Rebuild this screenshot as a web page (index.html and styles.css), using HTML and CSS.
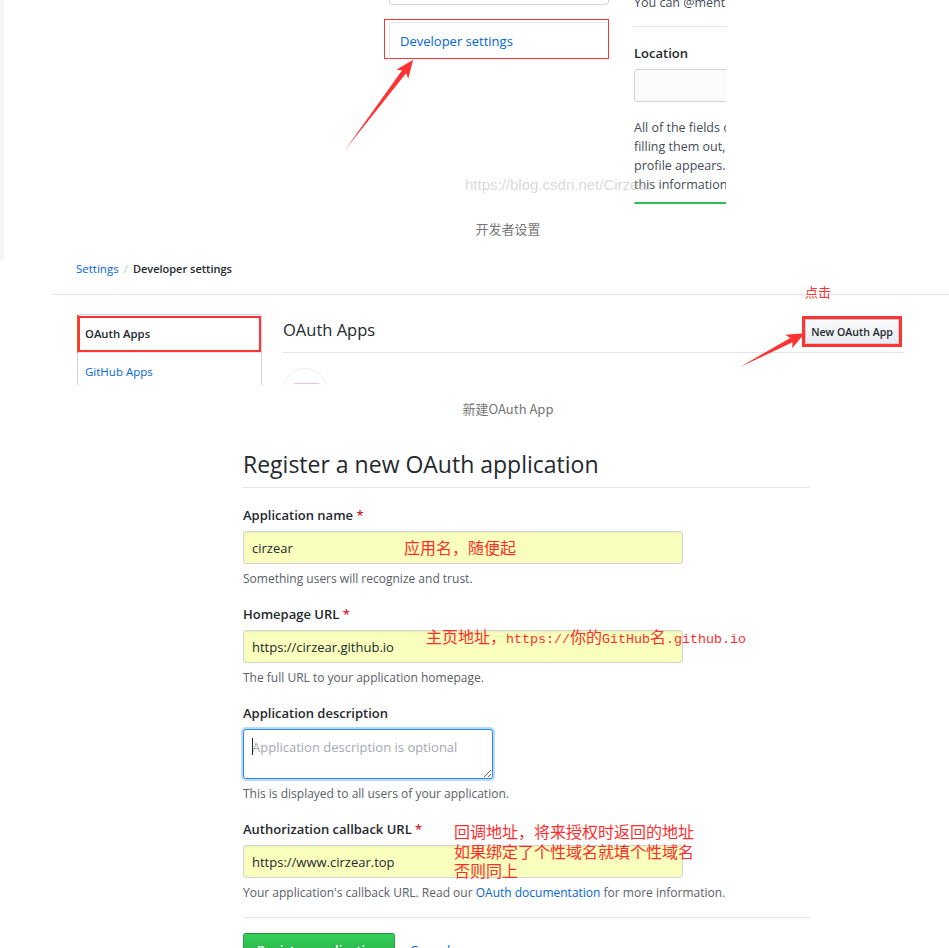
FILE: index.html
```html
<!DOCTYPE html>
<html lang="zh-CN">
<head>
<meta charset="utf-8">
<title>GitHub OAuth App 注册步骤</title>
<link rel="stylesheet" href="styles.css">
</head>
<body>
<div class="page">
  <section class="shot shot-profile">
    <div class="profile-left">
      <div class="clip-input"></div>
      <div class="mark-box">
        <a class="dev-link">Developer settings</a>
      </div>
    </div>
    <div class="profile-right">
      <p class="clip-line">You can @mention other users and organizations</p>
      <hr class="rule">
      <div class="lbl">Location</div>
      <div class="loc-input"></div>
      <p class="note-lines">All of the fields on this page are optional<br>filling them out, you're giving us consent<br>profile appears. Please see our privacy<br>this information.</p>
      <div class="green-edge"></div>
    </div>
    <div class="watermark">https://blog.csdn.net/Cirzear</div>
  </section>
  <p class="caption">开发者设置</p>

  <section class="shot shot-apps">
    <nav class="crumbs"><a class="link">Settings</a><span class="sep">/</span><strong>Developer settings</strong></nav>
    <div class="apps-body">
      <ul class="menu">
        <li class="menu-item is-selected">OAuth Apps</li>
        <li class="menu-item"><a class="link">GitHub Apps</a></li>
      </ul>
      <div class="apps-main">
        <div class="apps-head">
          <h2 class="apps-title">OAuth Apps</h2>
          <span class="btn-mark"><span class="click-note">点击</span><button class="btn-sm" type="button">New OAuth App</button></span>
        </div>
        <div class="avatar"></div>
      </div>
    </div>
  </section>
  <p class="caption caption-2">新建OAuth App</p>

  <section class="shot shot-form">
    <h1 class="form-title">Register a new OAuth application</h1>
    <form class="form">
      <div class="group">
        <label class="label">Application name <span class="req">*</span></label>
        <input class="field" type="text" value="cirzear" readonly>
        <p class="note">Something users will recognize and trust.</p>
        <span class="anno anno-1">应用名，随便起</span>
      </div>
      <div class="group">
        <label class="label">Homepage URL <span class="req">*</span></label>
        <input class="field" type="text" value="https://cirzear.github.io" readonly>
        <p class="note">The full URL to your application homepage.</p>
        <span class="anno anno-2">主页地址，<span class="mono">https://</span>你的<span class="mono">GitHub</span>名<span class="mono">.github.io</span></span>
      </div>
      <div class="group">
        <label class="label">Application description</label>
        <div class="area-wrap"><textarea class="area" placeholder="Application description is optional" readonly></textarea><span class="caret"></span></div>
        <p class="note">This is displayed to all users of your application.</p>
      </div>
      <div class="group group-last">
        <label class="label">Authorization callback URL <span class="req">*</span></label>
        <input class="field" type="text" value="https://www.cirzear.top" readonly>
        <p class="note">Your application's callback URL. Read our <a class="link">OAuth documentation</a> for more information.</p>
        <span class="anno anno-3">回调地址，将来授权时返回的地址<br>如果绑定了个性域名就填个性域名<br>否则同上</span>
      </div>
      <div class="actions">
        <button class="btn-primary" type="button">Register application</button>
        <a class="link cancel">Cancel</a>
      </div>
    </form>
  </section>

  <svg class="arrows" width="949" height="948" viewBox="0 0 949 948" aria-hidden="true">
    <g transform="translate(345 150) rotate(-52.9)">
      <polygon points="0,0 98,-2.5 95,-7.5 113,0 95,7.5 98,2.5" fill="#ff3333"/>
    </g>
    <g transform="translate(740 367) rotate(-27.6)">
      <polygon points="0,0 58,-2.5 55,-7.5 73,0 55,7.5 58,2.5" fill="#ff3333"/>
    </g>
  </svg>
</div>
</body>
</html>
```

FILE: styles.css
```css
html, body {
  margin: 0;
  padding: 0;
  overflow: hidden;
  background: #fff;
}

body {
  font-family: "Open Sans", "Noto Sans CJK SC", sans-serif;
  color: #24292e;
}

.page {
  position: relative;
  width: 949px;
  height: 948px;
  overflow: hidden;
  background: linear-gradient(#f3f5f8, #f3f5f8) 0 0 / 4px 260px no-repeat;
}

.link {
  color: #0366d6;
  text-decoration: none;
}

/* ---------- shot 1 : profile settings ---------- */
.shot-profile {
  position: relative;
  height: 210px;
  overflow: hidden;
  display: flex;
  gap: 25px;
  padding-left: 384px;
  box-sizing: border-box;
}

.profile-left {
  width: 225px;
  flex: none;
}

.clip-input {
  margin-left: 5px;
  height: 4px;
  border: 1px solid #d1d5da;
  border-top: 0;
  border-radius: 0 0 4px 4px;
}

.mark-box {
  margin-top: 14px;
  height: 40px;
  box-sizing: border-box;
  border: 1px solid #ff3333;
  padding: 2px 0 0 4px;
}

.dev-link {
  display: block;
  height: 37px;
  border: 1px solid #e1e4e8;
  border-right: 0;
  border-bottom: 0;
  padding-left: 10px;
  line-height: 36px;
  font-size: 13px;
  color: #0366d6;
}

.profile-right {
  width: 92px;
  flex: none;
  overflow: hidden;
  white-space: nowrap;
  font-size: 12.5px;
}

.clip-line {
  margin: -7px 0 0;
  line-height: 20px;
  color: #444d56;
}

.rule {
  margin: 13px 0 0;
  height: 0;
  border: 0;
  border-top: 1px solid #e1e4e8;
}

.lbl {
  margin-top: 16px;
  line-height: 20px;
  font-size: 13px;
  font-weight: 600;
}

.loc-input {
  margin-top: 6px;
  width: 130px;
  height: 33px;
  box-sizing: border-box;
  border: 1px solid #d1d5da;
  border-radius: 3px;
  background: #fafbfc;
}

.note-lines {
  margin: 16px 0 0;
  line-height: 19px;
  color: #444d56;
}

.green-edge {
  margin-top: 8px;
  width: 130px;
  height: 2px;
  background: #2cbe4e;
  border-radius: 2px 0 0 0;
}

.watermark {
  position: absolute;
  left: 465px;
  top: 176px;
  font-family: "Liberation Sans", sans-serif;
  font-size: 15px;
  line-height: 18px;
  color: rgba(185, 185, 185, 0.55);
  white-space: nowrap;
}

.caption {
  margin: 9px 0 0;
  padding-left: 67px;
  text-align: center;
  font-family: "Noto Sans CJK SC", sans-serif;
  font-size: 13px;
  line-height: 20px;
  color: #777;
}

.caption-2 {
  margin-top: 14px;
}

/* ---------- shot 2 : developer settings ---------- */
.shot-apps {
  height: 146px;
  overflow: hidden;
  padding-top: 20px;
  box-sizing: border-box;
}

.crumbs {
  margin-left: 52px;
  padding: 0 0 15px 24px;
  line-height: 20px;
  font-size: 11.5px;
  border-bottom: 1px solid #e1e4e8;
}

.crumbs .sep {
  color: #c6cbd1;
  margin: 0 5px;
}

.crumbs strong {
  font-weight: 600;
  font-size: 11px;
}

.apps-body {
  display: flex;
  gap: 21px;
  padding-left: 77px;
  margin-top: 19px;
}

.menu {
  flex: none;
  width: 185px;
  height: 110px;
  box-sizing: border-box;
  margin: 0;
  padding: 0;
  list-style: none;
  border: 1px solid #d1d5da;
  border-radius: 3px;
  font-size: 11.5px;
}

.menu-item {
  padding: 9px 8px 9px 7px;
  line-height: 19px;
  border-bottom: 1px solid #e1e4e8;
}

.menu-item.is-selected {
  position: relative;
  margin-left: -1px;
  padding-left: 6px;
  border-left: 2px solid #e36209;
  font-weight: 600;
  font-size: 11.3px;
}

.menu-item.is-selected::after {
  content: "";
  position: absolute;
  top: 1px;
  bottom: 0;
  left: -1px;
  right: 0;
  border: 2.5px solid #ff3333;
}

.apps-main {
  flex: none;
  width: 620px;
}

.apps-head {
  display: flex;
  justify-content: space-between;
  align-items: flex-start;
  height: 39px;
  box-sizing: border-box;
  border-bottom: 1px solid #e1e4e8;
}

.apps-title {
  margin: 1px 0 0;
  font-size: 16.5px;
  font-weight: 400;
  line-height: 30px;
}

.btn-mark {
  position: relative;
  margin-top: 2px;
  margin-right: 1px;
  display: flex;
  border: 3px solid #ff3333;
}

.click-note {
  position: absolute;
  left: 0;
  top: -37px;
  font-family: "Noto Sans CJK SC", sans-serif;
  font-size: 13px;
  line-height: 20px;
  color: #ff3333;
  white-space: nowrap;
}

.btn-sm {
  width: 94px;
  height: 25px;
  padding: 0;
  border: 1px solid rgba(27, 31, 35, 0.2);
  border-radius: 0;
  background: linear-gradient(-180deg, #fafbfc 0%, #e9edf1 90%);
  font-family: inherit;
  font-size: 10.6px;
  font-weight: 600;
  color: #24292e;
}

.avatar {
  margin-top: 15px;
  width: 44px;
  height: 44px;
  box-sizing: border-box;
  border: 1px solid #eee;
  border-radius: 50%;
  background: linear-gradient(#e6c3da, #e6c3da) 10px 14px / 25px 1px no-repeat;
}

/* ---------- shot 3 : register form ---------- */
.shot-form {
  padding: 30px 0 0 243px;
  width: 567px;
}

.form-title {
  margin: 0;
  padding-bottom: 8px;
  border-bottom: 1px solid #e1e4e8;
  font-size: 23px;
  font-weight: 400;
  line-height: 30px;
}

.form {
  margin-top: 17px;
}

.group {
  position: relative;
  margin-bottom: 15px;
}

.group-last {
  margin-bottom: 0;
}

.label {
  display: block;
  margin-bottom: 6px;
  font-size: 13px;
  font-weight: 600;
  line-height: 20px;
}

.req {
  color: #cb2431;
}

.field {
  display: block;
  width: 440px;
  height: 33px;
  box-sizing: border-box;
  margin: 0;
  padding: 0 8px;
  border: 1px solid #d1d5da;
  border-radius: 3px;
  background: #faffbd;
  box-shadow: inset 0 1px 2px rgba(27, 31, 35, 0.075);
  font-family: inherit;
  font-size: 13px;
  color: #24292e;
  outline: none;
}

.note {
  margin: 5px 0 0;
  font-size: 12px;
  line-height: 20px;
  color: #586069;
}

.area-wrap {
  position: relative;
  width: 250px;
  height: 50px;
}

.area {
  display: block;
  width: 250px;
  height: 50px;
  box-sizing: border-box;
  margin: 0;
  padding: 7px 8px;
  border: 1px solid #2188ff;
  border-radius: 3px;
  box-shadow: 0 0 0 2px rgba(3, 102, 214, 0.25);
  font-family: inherit;
  font-size: 13px;
  line-height: 20px;
  color: #24292e;
  resize: vertical;
  outline: none;
}

.area::placeholder {
  color: #a3aab1;
}

.caret {
  position: absolute;
  left: 9px;
  top: 9px;
  width: 1px;
  height: 17px;
  background: #24292e;
}

.anno {
  position: absolute;
  font-family: "Noto Sans CJK SC", sans-serif;
  font-size: 16px;
  line-height: 20px;
  color: #ff2d2d;
  white-space: nowrap;
}

.anno-1 { left: 161px; top: 32px; }
.anno-2 { left: 183px; top: 22px; }
.anno-3 { left: 211px; top: 3px; line-height: 19.5px; }

.mono {
  font-family: "Liberation Mono", monospace;
  font-size: 13.33px;
}

.actions {
  margin-top: 14px;
  padding-top: 15px;
  border-top: 1px solid #e1e4e8;
  display: flex;
  align-items: center;
  gap: 15px;
}

.btn-primary {
  width: 152px;
  height: 34px;
  padding: 0;
  border: 1px solid rgba(27, 31, 35, 0.2);
  border-radius: 3px;
  background: linear-gradient(-180deg, #34d058 0%, #28a745 90%);
  font-family: inherit;
  font-size: 13px;
  font-weight: 600;
  color: #fff;
}

.cancel {
  font-size: 13px;
}

.arrows {
  position: absolute;
  left: 0;
  top: 0;
  pointer-events: none;
}
```
